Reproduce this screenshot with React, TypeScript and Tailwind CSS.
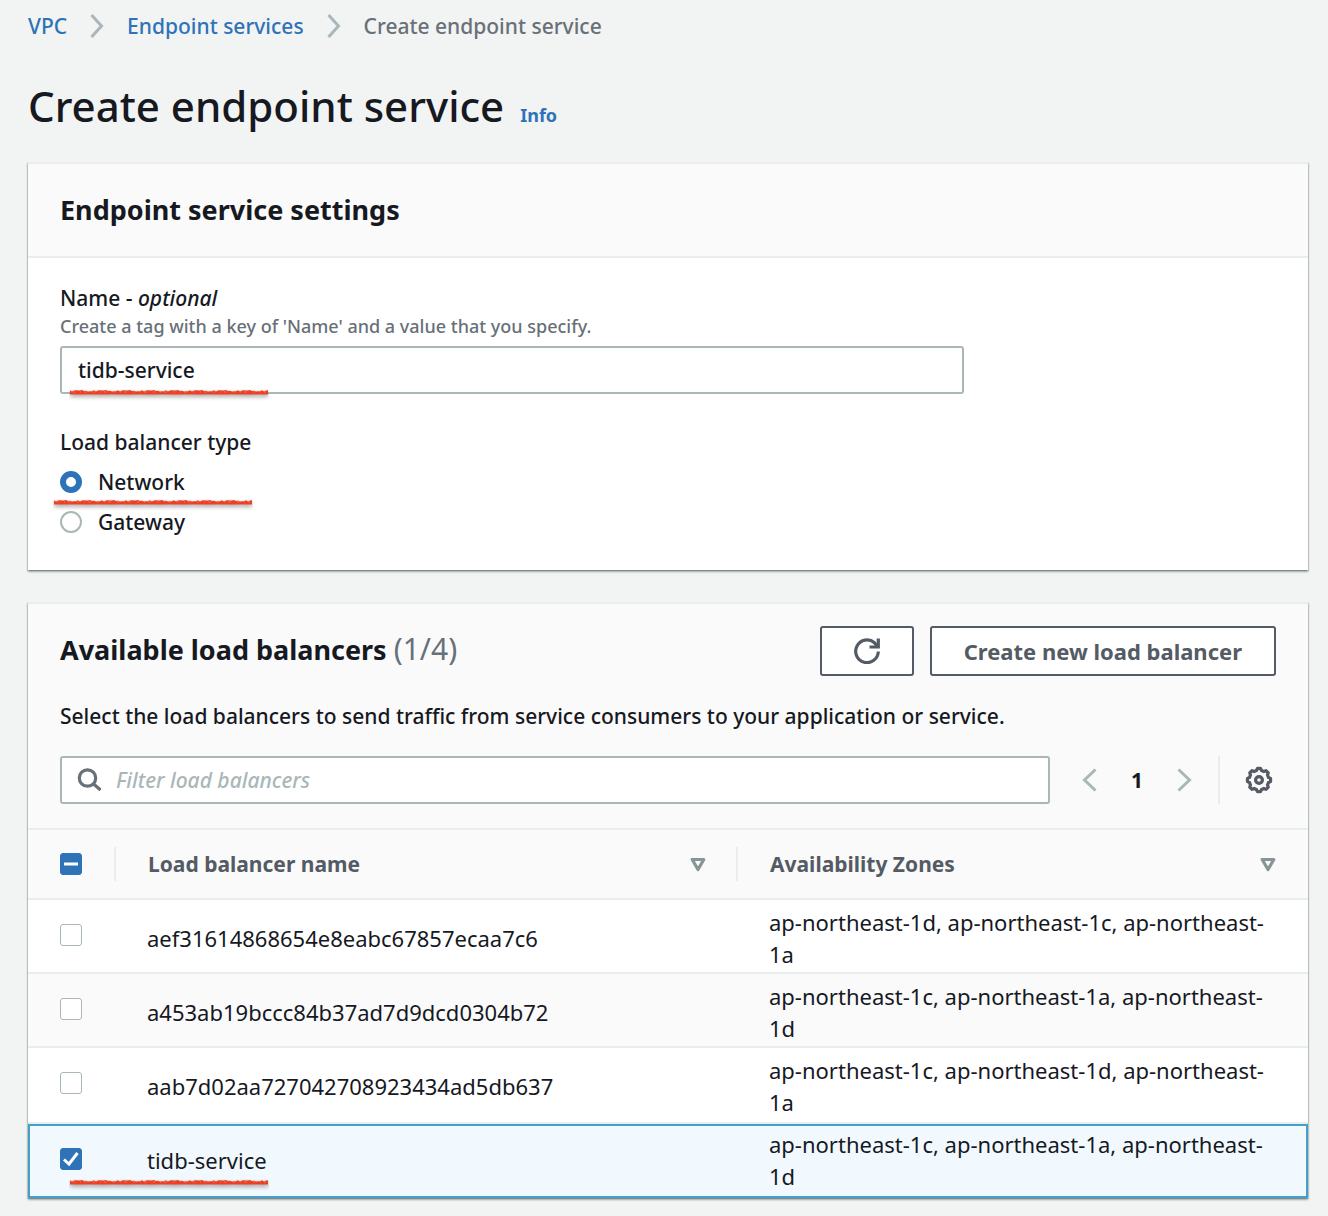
import { useEffect, useRef } from "react";

const CARD = "bg-white shadow-[0_2px_2px_0_rgba(0,28,36,0.3),1px_1px_1px_0_rgba(0,28,36,0.15),-1px_1px_1px_0_rgba(0,28,36,0.15)] border-t-2 border-[#eaeded]";

const balancers = [
  { name: "aef31614868654e8eabc67857ecaa7c6", zones: ["ap-northeast-1d", "ap-northeast-1c", "ap-northeast-1a"], selected: false },
  { name: "a453ab19bccc84b37ad7d9dcd0304b72", zones: ["ap-northeast-1c", "ap-northeast-1a", "ap-northeast-1d"], selected: false },
  { name: "aab7d02aa727042708923434ad5db637", zones: ["ap-northeast-1c", "ap-northeast-1d", "ap-northeast-1a"], selected: false },
  { name: "tidb-service", zones: ["ap-northeast-1c", "ap-northeast-1a", "ap-northeast-1d"], selected: true },
];

function BreadcrumbArrow() {
  return (
    <svg className="h-6 w-[14px] shrink-0" viewBox="0 0 14 24" fill="none" stroke="#aab7b8" strokeWidth="3" aria-hidden="true">
      <path d="M1.500 1 L11.500 12 L1.500 23" />
    </svg>
  );
}

/* Rough hand-drawn red underline: a solid band whose upper edge is jagged. */
const JAGS = [1.2, 2.1, 1.5, 2.4, 1.4, 2.2, 1.1, 2.5, 1.8, 1.3, 2.3, 1.6];
const markerEdge = Array.from({ length: 100 }, (_, i) => `L${i * 2 + 1} ${JAGS[(i * 7) % 12]}`).join(" ");

function Marker({ className }: { className: string }) {
  return (
    <svg className={`pointer-events-none absolute h-3 w-[200px] ${className}`} viewBox="0 0 200 12" fill="none" aria-hidden="true">
      <g style={{ filter: "drop-shadow(0 2px 2px rgba(0,0,0,0.4))" }}>
        <path d={`M1 1 ${markerEdge} L199 5.500 H1 Z`} fill="#ee3f22" />
      </g>
      <path d="M4 3 H197" stroke="#f58b75" strokeWidth="0.600" strokeDasharray="2 5 1 3 3 6" />
    </svg>
  );
}

function Checkbox({ label, checked, mixed }: { label: string; checked?: boolean; mixed?: boolean }) {
  const ref = useRef<HTMLInputElement>(null);
  useEffect(() => {
    if (ref.current) ref.current.indeterminate = !!mixed;
  }, [mixed]);
  return (
    <span className="relative block size-[22px]">
      <input
        ref={ref}
        type="checkbox"
        aria-label={label}
        defaultChecked={checked}
        className="peer block size-[22px] appearance-none rounded-[3px] border border-[#aab7b8] bg-white checked:border-[#2e73b8] checked:bg-[#2e73b8] indeterminate:border-[#2e73b8] indeterminate:bg-[#2e73b8]"
      />
      <svg className="pointer-events-none absolute inset-0 hidden peer-checked:block" viewBox="0 0 22 22" fill="none" stroke="#fff" strokeWidth="3" aria-hidden="true">
        <path d="M4 11.500 L9 16 L17.500 5" />
      </svg>
      <svg className="pointer-events-none absolute inset-0 hidden peer-indeterminate:block" viewBox="0 0 22 22" fill="none" stroke="#fff" strokeWidth="3" aria-hidden="true">
        <path d="M4 11 H18" />
      </svg>
    </span>
  );
}

function Radio({ label, checked }: { label: string; checked?: boolean }) {
  return (
    <label className="flex h-10 items-center gap-4">
      <input
        type="radio"
        name="load-balancer-type"
        defaultChecked={checked}
        className="size-[22px] appearance-none rounded-full border-2 border-[#aab7b8] bg-white checked:border-[6px] checked:border-[#2e73b8]"
      />
      {label}
    </label>
  );
}

function SortButton({ label }: { label: string }) {
  return (
    <button type="button" aria-label={label} className="shrink-0">
      <svg className="size-4" viewBox="0 0 16 16" fill="none" stroke="#879596" strokeWidth="3.200" strokeLinejoin="round" aria-hidden="true">
        <path d="M2.200 3.500 H13.800 L8 13.500 Z" />
      </svg>
    </button>
  );
}

function GearIcon() {
  const points = Array.from({ length: 96 }, (_, i) => {
    const a = (i / 96) * Math.PI * 2;
    const r = 10.7 + 0.9 * Math.tanh(4 * Math.cos(8 * a));
    return `${(14 + r * Math.sin(a)).toFixed(2)},${(14 - r * Math.cos(a)).toFixed(2)}`;
  }).join(" ");
  return (
    <svg className="size-7" viewBox="0 0 28 28" fill="none" stroke="#545b64" strokeWidth="3.200" aria-hidden="true">
      <polygon points={points} />
      <circle cx="14" cy="14" r="3.400" />
    </svg>
  );
}

/* Lets a long zone list wrap right before the zone number. */
function Zones({ names }: { names: string[] }) {
  return names.map((zone, i) => {
    const cut = zone.lastIndexOf("-") + 1;
    return (
      <span key={zone}>
        {i > 0 && ", "}
        {zone.slice(0, cut)}
        <wbr />
        {zone.slice(cut)}
      </span>
    );
  });
}

export default function App() {
  return (
    <div className="min-h-screen bg-[#f2f3f3] pr-5 pb-[18px] pl-7 font-['Noto_Sans','Open_Sans',sans-serif] text-[21px] leading-8 font-medium text-[#16191f]">
      <nav aria-label="Breadcrumb" className="flex h-[52px] items-center">
        <a href="#vpc" className="text-[#2e73b8]">VPC</a>
        <span className="mx-[23px] flex"><BreadcrumbArrow /></span>
        <a href="#endpoint-services" className="text-[#2e73b8]">Endpoint services</a>
        <span className="mx-[23px] flex"><BreadcrumbArrow /></span>
        <span className="text-[#687078]" aria-current="page">Create endpoint service</span>
      </nav>

      <header className="flex h-[110px] items-baseline gap-4 pt-6">
        <h1 className="text-[42px] leading-[60px]">Create endpoint service</h1>
        <a href="#info" className="text-[18px] font-bold text-[#2e73b8]">Info</a>
      </header>

      <main className="flex flex-col gap-8">
        <section className={CARD}>
          <div className="border-b-2 border-[#eaeded] bg-[#fafafa] px-8 py-7">
            <h2 className="text-[27px] leading-9 font-bold">Endpoint service settings</h2>
          </div>
          <div className="px-8 pt-6 pb-7">
            <div className="w-3/4 pr-2">
              <label htmlFor="service-name" className="block">Name - <em>optional</em></label>
              <p id="name-hint" className="text-[18px] leading-6 text-[#687078]">Create a tag with a key of 'Name' and a value that you specify.</p>
              <div className="relative mt-2">
                <input id="service-name" aria-describedby="name-hint" type="text" defaultValue="tidb-service" className="block h-12 w-full rounded-[3px] border-2 border-[#aab7b8] bg-white px-4" />
                <Marker className="top-[43px] left-[9px]" />
              </div>
            </div>
            <fieldset className="mt-8">
              <legend>Load balancer type</legend>
              <div className="relative pt-1">
                <Radio label="Network" checked />
                <Radio label="Gateway" />
                <Marker className="top-[41px] -left-[7px]" />
              </div>
            </fieldset>
          </div>
        </section>

        <section className={CARD}>
          <div className="bg-[#fafafa] px-8 pt-[22px] pb-6">
            <div className="flex items-center gap-4">
              <h2 className="mr-auto mb-1 text-[27px] leading-9 font-bold">
                Available load balancers <span className="text-[30px] font-normal text-[#687078]">(1/4)</span>
              </h2>
              <button type="button" aria-label="Refresh" className="flex h-[50px] items-center rounded-[3px] border-2 border-[#545b64] bg-white px-8">
                <svg className="size-[26px]" viewBox="0 0 26 26" fill="none" stroke="#545b64" strokeWidth="3.200" aria-hidden="true">
                  <path d="M24.300 13.500 A11.300 11.300 0 1 1 20.500 4.800 L23 8" />
                  <path d="M24.300 0.500 V9 H15.500" />
                </svg>
              </button>
              <button type="button" className="h-[50px] rounded-[3px] border-2 border-[#545b64] bg-white px-8 text-[22px] font-bold text-[#545b64]">Create new load balancer</button>
            </div>
            <p className="mt-6">Select the load balancers to send traffic from service consumers to your application or service.</p>
            <div className="mt-6 flex items-center">
              <div className="relative grow">
                <input type="search" aria-label="Filter load balancers" placeholder="Filter load balancers" className="block h-12 w-full rounded-[3px] border-2 border-[#aab7b8] bg-white pr-4 pl-[54px] placeholder:text-[#aab7b8] placeholder:italic" />
                <svg className="pointer-events-none absolute top-3 left-[17px] size-6" viewBox="0 0 24 24" fill="none" stroke="#687078" strokeWidth="3.200" aria-hidden="true">
                  <circle cx="10.500" cy="10" r="8.200" />
                  <path d="M16 15.500 L23.500 22" />
                </svg>
              </div>
              <button type="button" aria-label="Previous page" className="ml-8">
                <svg className="size-6" viewBox="0 0 24 24" fill="none" stroke="#aab7b8" strokeWidth="3" aria-hidden="true"><path d="M13.500 1.500 L2.500 12 L13.500 22.500" /></svg>
              </button>
              <button type="button" className="w-[62px] text-center font-bold">1</button>
              <button type="button" aria-label="Next page" className="ml-1.5">
                <svg className="size-6" viewBox="0 0 24 24" fill="none" stroke="#aab7b8" strokeWidth="3" aria-hidden="true"><path d="M4.500 1.500 L15.500 12 L4.500 22.500" /></svg>
              </button>
              <button type="button" aria-label="Preferences" className="ml-5 flex h-12 items-center border-l-2 border-[#eaeded] pr-[3px] pl-[25px]"><GearIcon /></button>
            </div>
          </div>

          <table className="w-full table-fixed border-separate border-spacing-0 text-left">
            <colgroup>
              <col className="w-[88px]" />
              <col className="w-[622px]" />
              <col />
            </colgroup>
            <thead className="bg-[#fafafa] text-[#545b64]">
              <tr>
                <th className="h-[72px] border-y-2 border-[#eaeded] p-0">
                  <div className="flex h-[34px] items-center border-r-2 border-[#eaeded] pl-8">
                    <Checkbox label="Select all load balancers" mixed />
                  </div>
                </th>
                <th className="border-y-2 border-[#eaeded] p-0">
                  <div className="flex h-[34px] items-center justify-between border-r-2 border-[#eaeded] pr-[30px] pl-8">
                    Load balancer name
                    <SortButton label="Sort by load balancer name" />
                  </div>
                </th>
                <th className="border-y-2 border-[#eaeded] p-0">
                  <div className="flex h-[34px] items-center justify-between pr-8 pl-8">
                    Availability Zones
                    <SortButton label="Sort by availability zones" />
                  </div>
                </th>
              </tr>
            </thead>
            <tbody className="text-[22px] font-normal">
              {balancers.map((b, i) => {
                const edge = b.selected ? "" : "border-b-2 border-[#eaeded]";
                const height = balancers[i + 1]?.selected ? "h-[76px]" : "h-[74px]";
                return (
                  <tr
                    key={b.name}
                    className={
                      b.selected
                        ? "bg-[#f2f9fe] align-top outline-2 -outline-offset-2 outline-[#44a0c8]"
                        : "bg-white align-top even:bg-[#fafafa]"
                    }
                  >
                    <td className={`p-0 pt-6 pl-8 ${height} ${edge}`}><Checkbox label={`Select ${b.name}`} checked={b.selected} /></td>
                    <td className={`p-0 pl-[31px] ${edge} ${b.selected ? "pt-5" : "pt-[22px]"}`}>
                      <div className="relative">
                        {b.name}
                        {b.selected && <Marker className="top-[35px] -left-[78px]" />}
                      </div>
                    </td>
                    <td className={`p-0 pr-8 pl-[31px] ${edge} ${b.selected ? "pt-1" : "pt-1.5"}`}><Zones names={b.zones} /></td>
                  </tr>
                );
              })}
            </tbody>
          </table>
        </section>
      </main>
    </div>
  );
}
